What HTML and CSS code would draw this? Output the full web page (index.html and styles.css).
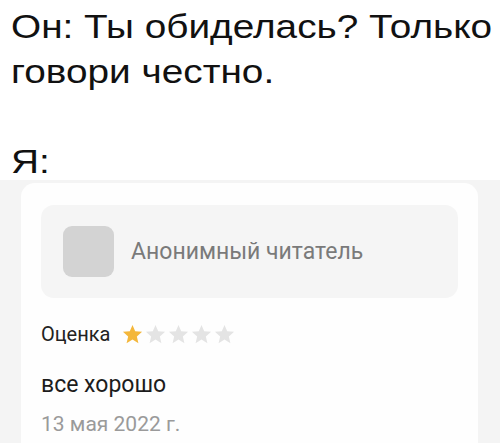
FILE: index.html
```html
<!DOCTYPE html>
<html lang="ru">
<head>
<meta charset="utf-8">
<title>Он: Ты обиделась?</title>
<link rel="stylesheet" href="styles.css">
</head>
<body>
<div class="caption">
  <p class="line">Он: Ты обиделась? Только<br>говори честно.</p>
  <p class="line me">Я:</p>
</div>
<div class="screen">
  <div class="card">
    <div class="author">
      <div class="avatar"></div>
      <div class="name">Анонимный читатель</div>
    </div>
    <div class="rating">
      <span class="label">Оценка</span>
      <div class="stars">
        <svg class="star on" viewBox="0 0 24 24"><path d="M12 17.27L18.18 21l-1.64-7.03L22 9.24l-7.19-.61L12 2 9.19 8.63 2 9.24l5.46 4.73L5.82 21z"/></svg>
        <svg class="star" viewBox="0 0 24 24"><path d="M12 17.27L18.18 21l-1.64-7.03L22 9.24l-7.19-.61L12 2 9.19 8.63 2 9.24l5.46 4.73L5.82 21z"/></svg>
        <svg class="star" viewBox="0 0 24 24"><path d="M12 17.27L18.18 21l-1.64-7.03L22 9.24l-7.19-.61L12 2 9.19 8.63 2 9.24l5.46 4.73L5.82 21z"/></svg>
        <svg class="star" viewBox="0 0 24 24"><path d="M12 17.27L18.18 21l-1.64-7.03L22 9.24l-7.19-.61L12 2 9.19 8.63 2 9.24l5.46 4.73L5.82 21z"/></svg>
        <svg class="star" viewBox="0 0 24 24"><path d="M12 17.27L18.18 21l-1.64-7.03L22 9.24l-7.19-.61L12 2 9.19 8.63 2 9.24l5.46 4.73L5.82 21z"/></svg>
      </div>
    </div>
    <p class="text">все хорошо</p>
    <p class="date">13 мая 2022 г.</p>
  </div>
</div>
</body>
</html>
```
FILE: styles.css
```css
html, body {
  margin: 0;
  padding: 0;
  background: #ffffff;
  height: 443px;
  overflow: hidden;
}
body {
  display: flex;
  flex-direction: column;
}
.caption {
  padding: 4px 0 0 11px;
  font-family: "Liberation Sans", Arial, sans-serif;
  font-size: 34px;
  line-height: 45px;
  color: #111111;
  white-space: nowrap;
}
.line {
  margin: 0;
  width: max-content;
  transform: scaleX(1.14);
  transform-origin: left center;
}
.me {
  margin-top: 45px;
  height: 41px;
}
.screen {
  flex: 1;
  background: #f4f4f4;
  padding: 3px 22px 0 21px;
  font-family: Roboto, "Noto Sans", sans-serif;
}
.card {
  background: #fefefe;
  border-radius: 14px 14px 0 0;
  padding: 22px 20px 20px 20px;
  height: 100%;
  box-sizing: border-box;
}
.author {
  height: 93px;
  background: #f5f5f5;
  border-radius: 13px;
  display: flex;
  align-items: center;
  padding-left: 22px;
  gap: 17px;
}
.avatar {
  width: 51px;
  height: 51px;
  border-radius: 9px;
  background: #d3d3d3;
}
.name {
  font-size: 23px;
  color: #7a7a7a;
}
.rating {
  margin-top: 24px;
  display: flex;
  align-items: center;
  gap: 11px;
  height: 24px;
}
.label {
  font-size: 20px;
  line-height: 24px;
  color: #222222;
}
.stars {
  display: flex;
  gap: 0;
}
.star {
  width: 23px;
  height: 23px;
  fill: #e4e4e4;
}
.star.on {
  fill: #f4b73b;
}
.text {
  margin: 25px 0 0 0;
  font-size: 23px;
  line-height: 28px;
  color: #1c1c1c;
}
.date {
  margin: 13px 0 0 0;
  font-size: 21px;
  line-height: 24px;
  color: #9a9a9a;
}
```
